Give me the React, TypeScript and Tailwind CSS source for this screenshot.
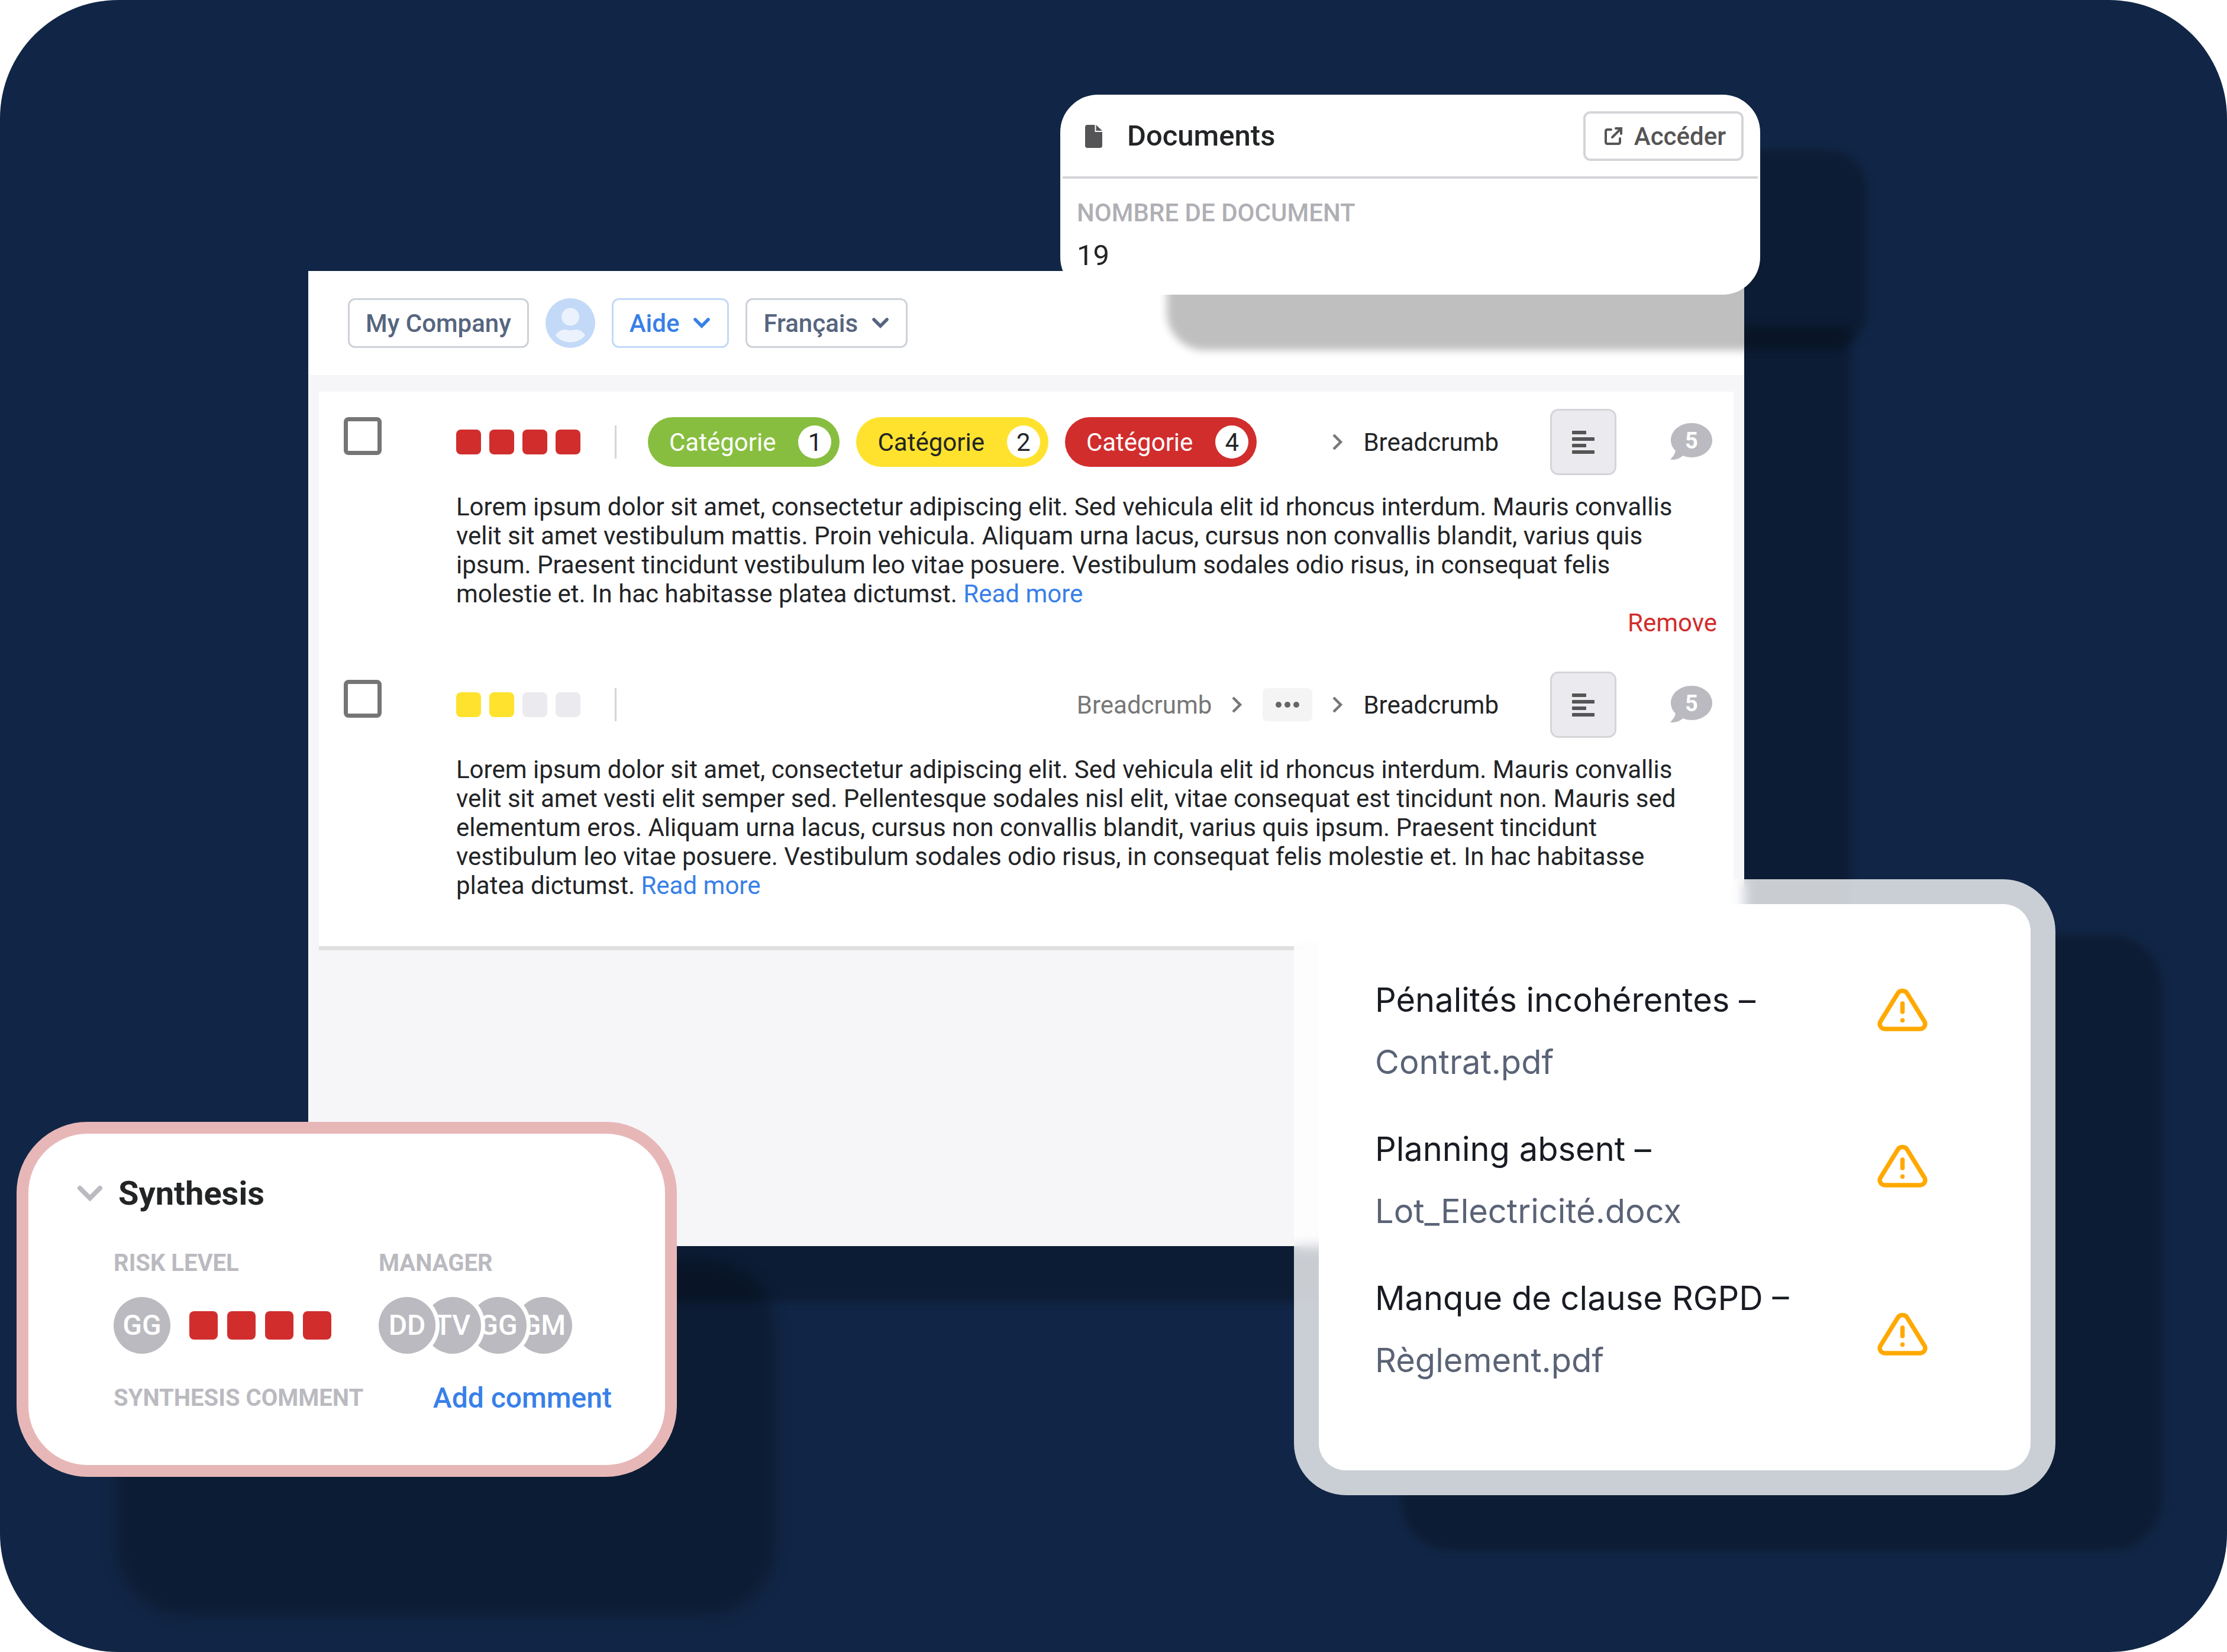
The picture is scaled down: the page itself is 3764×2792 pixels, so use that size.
import React from "react";

function Chevron({ dir, className }: { dir: "down" | "right"; className: string }) {
  return dir === "down" ? (
    <svg viewBox="0 0 32 32" className={className} fill="none" stroke="currentColor" strokeWidth="5.500" strokeLinecap="round" aria-hidden="true">
      <path d="M5 10 16 21 27 10" />
    </svg>
  ) : (
    <svg viewBox="0 0 28 28" className={className} fill="none" stroke="currentColor" strokeWidth="4.500" aria-hidden="true">
      <path d="M7 2 19 14 7 26" />
    </svg>
  );
}

function Squares({ level, tone, size }: { level: number; tone: string; size: string }) {
  return (
    <div className={`flex ${size}`} role="img" aria-label={`Level ${level} of 4`}>
      {[1, 2, 3, 4].map((n) => (
        <span key={n} className={`rounded-lg ${n <= level ? tone : "bg-[#ebebef]"}`} />
      ))}
    </div>
  );
}

function Pill({ tone, count }: { tone: string; count: number }) {
  return (
    <span className={`flex h-21 items-center gap-[38px] rounded-full pr-3.5 pl-9 ${tone}`}>
      Catégorie
      <span className="flex size-14 items-center justify-center rounded-full bg-white text-[#222426]">{count}</span>
    </span>
  );
}

function Bubble({ count }: { count: number }) {
  return (
    <button className="relative flex h-21 w-21 items-center justify-center pr-0.5 pb-1 text-[38px] font-bold text-white" aria-label={`${count} comments`}>
      <svg viewBox="0 0 84 84" className="absolute inset-0 size-full" aria-hidden="true">
        <path
          fill="#babac0"
          d="M41 10C60.500 10 76 23 76 39S60.500 68 41 68C36 68 31 67 26.500 65C21 70 14 72.500 6 72C5.500 71.500 5.500 71 6 70.500C10 66 13 62 14 57C9 52 6 46 6 39C6 23 21.500 10 41 10Z"
        />
      </svg>
      <span className="relative">{count}</span>
    </button>
  );
}

function Item({
  id,
  level,
  tone,
  pills,
  parents,
  text,
  removable,
}: {
  id: string;
  level: number;
  tone: string;
  pills?: React.ReactNode;
  parents?: boolean;
  text: string;
  removable?: boolean;
}) {
  return (
    <li className="flex gap-[126px] py-[29px] pr-7 pl-[42px]">
      <input
        id={id}
        type="checkbox"
        aria-label="Select item"
        className="mt-3.5 size-16 shrink-0 appearance-none rounded-lg border-[7px] border-[#757575] bg-white"
      />
      <div className="min-w-0 flex-1">
        <div className="flex h-28 items-center">
          <Squares level={level} tone={tone} size="gap-3.5 *:size-[42px]" />
          <span className="ml-[58px] h-14 w-[3px] bg-[#d5d5d9]" />
          <div className="ml-[53px] flex gap-7">{pills}</div>
          <nav className="ml-auto flex items-center gap-[29px]" aria-label="Breadcrumb">
            {parents && (
              <>
                <a href="#" className="text-[#777777]">Breadcrumb</a>
                <Chevron dir="right" className="size-7 text-[#777777]" />
                <button aria-label="Show hidden levels" className="flex h-14 w-21 items-center justify-center gap-[5px] rounded-lg bg-[#f4f4f4]">
                  <span className="size-2.5 rounded-full bg-[#666666]" />
                  <span className="size-2.5 rounded-full bg-[#666666]" />
                  <span className="size-2.5 rounded-full bg-[#666666]" />
                </button>
              </>
            )}
            <Chevron dir="right" className="size-7 text-[#777777]" />
            <a href="#">Breadcrumb</a>
          </nav>
          <button
            aria-label="Details"
            className="mr-[86px] ml-[87px] flex size-28 flex-col items-start justify-center gap-[5px] rounded-[14px] border-3 border-[#d5d5d9] bg-[#ebebef] pl-[34px] *:h-1.5 *:rounded-[1px] *:bg-[#555555]"
          >
            <span className="w-6" />
            <span className="w-[38px]" />
            <span className="w-6" />
            <span className="w-[38px]" />
          </button>
          <Bubble count={5} />
        </div>
        <p className="mt-[29px] pr-7">
          {text} <a href="#" className="text-[#3880e8]">Read more</a>
        </p>
        <div className="flex h-[49px] justify-end">
          {removable && <button className="text-[#d12d2d]">Remove</button>}
        </div>
      </div>
    </li>
  );
}

function Workspace() {
  return (
    <main className="absolute top-[458px] right-[816px] left-[521px] h-[1648px] bg-[#f6f6f9] text-[42px] leading-[49px] text-[#222426] shadow-[180px_94px_14px_rgba(0,0,0,0.25)]">
      <header className="flex h-44 items-center gap-7 bg-white pl-[67px] font-medium text-[#56657f]">
        <button className="h-21 rounded-xl border-3 border-[#cdd2d9] px-[27px]">My Company</button>
        <button aria-label="Account" className="size-21">
          <svg viewBox="0 0 84 84" className="size-full" aria-hidden="true">
            <circle cx="42" cy="42" r="42" fill="#c3d9f8" />
            <circle cx="42" cy="31.500" r="15" fill="#ebf2fd" />
            <path fill="#ebf2fd" d="M17 63C20 57 26 53 33 53C38 54.500 46 54.500 51 53C58 53 64 57 67 63C60 71 51 74.500 42 74.500S24 71 17 63Z" />
          </svg>
        </button>
        <button className="flex h-21 items-center gap-[22px] rounded-xl border-3 border-[#c3d9f8] px-[27px] text-[#3880e8]">
          Aide
          <Chevron dir="down" className="size-8" />
        </button>
        <button className="flex h-21 items-center gap-[22px] rounded-xl border-3 border-[#cdd2d9] px-[27px]">
          Français
          <Chevron dir="down" className="size-8" />
        </button>
      </header>
      <ul className="mx-[18px] mt-7 border-b-7 border-[#e0e0e0] bg-white">
        <Item
          id="item-1"
          level={4}
          tone="bg-[#d12d2d]"
          removable
          pills={
            <>
              <Pill tone="bg-[#87be3f] text-white" count={1} />
              <Pill tone="bg-[#ffe22e]" count={2} />
              <Pill tone="bg-[#d12d2d] text-white" count={4} />
            </>
          }
          text="Lorem ipsum dolor sit amet, consectetur adipiscing elit. Sed vehicula elit id rhoncus interdum. Mauris convallis velit sit amet vestibulum mattis. Proin vehicula. Aliquam urna lacus, cursus non convallis blandit, varius quis ipsum. Praesent tincidunt vestibulum leo vitae posuere. Vestibulum sodales odio risus, in consequat felis molestie et. In hac habitasse platea dictumst."
        />
        <Item
          id="item-2"
          level={2}
          tone="bg-[#ffe22e]"
          parents
          text="Lorem ipsum dolor sit amet, consectetur adipiscing elit. Sed vehicula elit id rhoncus interdum. Mauris convallis velit sit amet vesti elit semper sed. Pellentesque sodales nisl elit, vitae consequat est tincidunt non. Mauris sed elementum eros. Aliquam urna lacus, cursus non convallis blandit, varius quis ipsum. Praesent tincidunt vestibulum leo vitae posuere. Vestibulum sodales odio risus, in consequat felis molestie et. In hac habitasse platea dictumst."
        />
      </ul>
    </main>
  );
}

function DocumentsCard() {
  return (
    <section className="absolute top-40 right-[789px] w-[1183px] rounded-[64px] border-4 border-white bg-white pb-[34px] text-[#222426] shadow-[180px_94px_14px_rgba(0,0,0,0.25)]">
      <header className="flex h-[138px] items-center border-b-4 border-[#d5d5d9] pr-6 pb-0.5 pl-[38px]">
        <svg viewBox="0 0 29 39" className="h-[39px] w-[29px]" fill="#555557" aria-hidden="true">
          <path d="M4 0H16.500V12H29V35Q29 39 25 39H4Q0 39 0 35V4Q0 0 4 0Z" />
          <path d="M18.500 0 29 10H18.500Z" />
        </svg>
        <h2 className="ml-[42px] text-[49px] leading-14 font-medium">Documents</h2>
        <button className="ml-auto flex h-21 items-center gap-5 rounded-xl border-4 border-[#d5d5d9] pr-[26px] pl-8 text-[42px] font-medium text-[#555555]">
          <svg viewBox="0 0 30 30" className="size-[30px]" fill="none" stroke="currentColor" strokeWidth="4" strokeLinecap="round" aria-hidden="true">
            <path d="M11 4H5Q2 4 2 7V25Q2 28 5 28H23Q26 28 26 25V19" />
            <path d="M19 2H28V11M27 3 13 17" />
          </svg>
          Accéder
        </button>
      </header>
      <dl className="px-6 pt-[30px]">
        <dt className="text-[42px] leading-14 font-medium text-[#afafb4]">NOMBRE DE DOCUMENT</dt>
        <dd className="mt-4 text-[49px] leading-14">19</dd>
      </dl>
    </section>
  );
}

function Avatar({ initials }: { initials: string }) {
  return (
    <span className="flex size-24 shrink-0 items-center justify-center rounded-full bg-[#babac0] text-[48px] font-medium text-white">
      {initials}
    </span>
  );
}

function SynthesisCard() {
  const managers = ["DD", "TV", "GG", "GM"];
  return (
    <section className="absolute bottom-[296px] left-7 h-[600px] w-[1116px] rounded-[120px] border-20 border-[#e7b7b7] bg-white pt-[68px] pr-[90px] pl-36 shadow-[168px_235px_24px_rgba(0,0,0,0.25)]">
      <h2 className="-ml-[62px] flex items-center gap-[26px] text-[56px] leading-[66px] font-bold text-[#222426]">
        <svg viewBox="0 0 44 28" className="h-7 w-11" fill="none" stroke="#babac0" strokeWidth="8" strokeLinecap="round" aria-hidden="true">
          <path d="M5 5 22 22 39 5" />
        </svg>
        Synthesis
      </h2>
      <div className="mt-[61px] grid grid-cols-[448px_1fr] text-[40px] leading-12 font-bold text-[#babac0]">
        <h3>RISK LEVEL</h3>
        <h3>MANAGER</h3>
        <div className="mt-[33px] flex items-center gap-8">
          <Avatar initials="GG" />
          <Squares level={4} tone="bg-[#d12d2d]" size="gap-4 *:size-12" />
        </div>
        <div className="mt-[33px] flex">
          {managers.map((m, i) => (
            <span key={m} className="-mr-[19px] rounded-full shadow-[0_0_0_7px_white]" style={{ position: "relative", zIndex: managers.length - i }}>
              <Avatar initials={m} />
            </span>
          ))}
        </div>
      </div>
      <div className="mt-[47px] flex items-center justify-between text-[40px] leading-14 font-bold text-[#babac0]">
        <h3>SYNTHESIS COMMENT</h3>
        <button className="text-[48px] font-medium text-[#3880e8]">Add comment</button>
      </div>
    </section>
  );
}

function Warning({ className }: { className: string }) {
  return (
    <svg viewBox="0 0 85 74" className={`h-[74px] w-[85px] shrink-0 self-start ${className}`} fill="none" stroke="#ffa900" strokeWidth="7.500" strokeLinecap="round" strokeLinejoin="round" aria-hidden="true">
      <path d="M34.500 9 5.500 56C2 62 6 69 13 69H72C79 69 83 62 79.500 56L50.500 9C47 3 38 3 34.500 9Z" />
      <path d="M42.500 26V40M42.500 54.500V54.600" />
    </svg>
  );
}

function AlertsCard() {
  const alerts = [
    { title: "Pénalités incohérentes –", file: "Contrat.pdf", place: "mt-8" },
    { title: "Planning absent –", file: "Lot_Electricité.docx", place: "mt-11" },
    { title: "Manque de clause RGPD –", file: "Règlement.pdf", place: "mt-19" },
  ];
  return (
    <section className="absolute right-[290px] bottom-[265px] h-[1041px] w-[1287px] rounded-[88px] bg-white/78 p-[42px] font-['Inter',sans-serif] shadow-[180px_94px_14px_rgba(0,0,0,0.25)] backdrop-blur-[10px]">
      <ul className="flex h-full flex-col gap-[42px] rounded-[46px] bg-white pt-[110px] pr-[174px] pl-[95px] text-[56px] leading-[105px]">
        {alerts.map((a) => (
          <li key={a.file} className="flex justify-between">
            <div>
              <p className="text-[#191b23]">{a.title}</p>
              <a href="#" className="block text-[#5a6376]">{a.file}</a>
            </div>
            <Warning className={a.place} />
          </li>
        ))}
      </ul>
    </section>
  );
}

export default function App() {
  return (
    <div className="bg-white font-['Roboto',sans-serif]">
      <div className="relative h-screen min-h-[2792px] overflow-hidden rounded-[200px] bg-[#112646]">
        <Workspace />
        <DocumentsCard />
        <SynthesisCard />
        <AlertsCard />
      </div>
    </div>
  );
}
